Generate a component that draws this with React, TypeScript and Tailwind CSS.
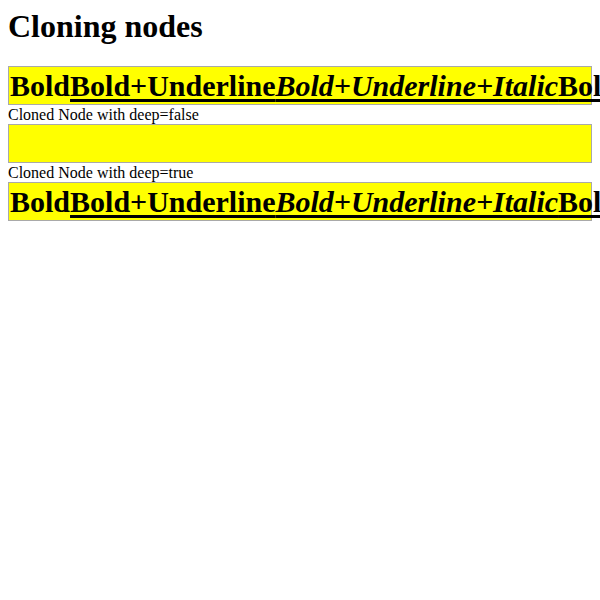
const serif = { fontFamily: '"Liberation Serif", "Times New Roman", serif' }

function Line() {
  return (
    <b>
      Bold
      <u className="decoration-[3px] underline-offset-[3px]">
        Bold+Underline
        <i>Bold+Underline+Italic</i>
        Bold+Underline
      </u>
      Bold
    </b>
  )
}

export default function App() {
  return (
    <div className="w-[600px] h-[600px] overflow-hidden bg-white text-black" style={serif}>
      <div className="p-2">
        <h1 className="text-[32px] font-bold leading-[37px] mb-[21px]">Cloning nodes</h1>

        <div className="bg-[#ffff00] border border-[#a9a9a9] h-[39px] whitespace-nowrap text-[30px] leading-[37px] pl-px">
          <Line />
        </div>
        <div className="text-[16px] leading-[19px]">Cloned Node with deep=false</div>

        <div className="bg-[#ffff00] border border-[#a9a9a9] h-[39px]" />
        <div className="text-[16px] leading-[19px]">Cloned Node with deep=true</div>

        <div className="bg-[#ffff00] border border-[#a9a9a9] h-[39px] whitespace-nowrap text-[30px] leading-[37px] pl-px">
          <Line />
        </div>
      </div>
    </div>
  )
}
